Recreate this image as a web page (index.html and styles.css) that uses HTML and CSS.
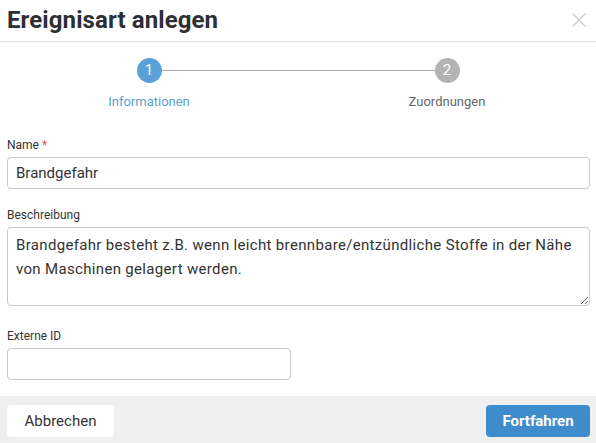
FILE: index.html
```html
<!DOCTYPE html>
<html lang="de">
<head>
<meta charset="utf-8">
<title>Ereignisart anlegen</title>
<link rel="stylesheet" href="styles.css">
</head>
<body>
<div class="modal">
  <header class="modal-header">
    <h1 class="modal-title">Ereignisart anlegen</h1>
    <button class="close" aria-label="Schließen">
      <svg width="14" height="14" viewBox="0 0 14 14"><path d="M0.5 0.5 L13.5 13.5 M13.5 0.5 L0.5 13.5" stroke="#c8c8c8" stroke-width="1.2" fill="none"/></svg>
    </button>
  </header>

  <div class="stepper">
    <div class="step active">
      <div class="step-dot">1</div>
      <div class="step-label">Informationen</div>
    </div>
    <div class="step">
      <div class="step-dot">2</div>
      <div class="step-label">Zuordnungen</div>
    </div>
    <div class="step-line"></div>
  </div>

  <form class="form">
    <div class="field field-name">
      <label class="label">Name <span class="req">*</span></label>
      <input class="input" type="text" value="Brandgefahr">
    </div>
    <div class="field field-desc">
      <label class="label">Beschreibung</label>
      <textarea class="textarea">Brandgefahr besteht z.B. wenn leicht brennbare/entzündliche Stoffe in der Nähe von Maschinen gelagert werden.</textarea>
    </div>
    <div class="field field-ext">
      <label class="label">Externe ID</label>
      <input class="input input-half" type="text" value="">
    </div>
  </form>

  <footer class="modal-footer">
    <button class="btn btn-default" type="button">Abbrechen</button>
    <button class="btn btn-primary" type="button">Fortfahren</button>
  </footer>
</div>
</body>
</html>
```

FILE: styles.css
```css
* { box-sizing: border-box; }
html, body { margin: 0; padding: 0; background: #fff; }
body {
  font-family: Roboto, "Liberation Sans", Arial, sans-serif;
  color: #333;
  width: 596px;
  height: 443px;
  overflow: hidden;
}
.modal { display: flex; flex-direction: column; height: 443px; }

.modal-header {
  height: 42px;
  border-bottom: 1px solid #e0e0e0;
  display: flex;
  align-items: center;
  justify-content: space-between;
  padding: 0 10px 0 7px;
}
.modal-title {
  margin: 0;
  font-size: 24px;
  font-weight: 700;
  color: #2d2f34;
  line-height: 41px;
  letter-spacing: 0.1px;
}
.close {
  border: 0;
  background: none;
  padding: 0;
  width: 14px;
  height: 14px;
  margin-top: -2px;
  display: flex;
}

.stepper {
  position: relative;
  display: grid;
  grid-template-columns: 1fr 1fr;
  padding-top: 16px;
}
.step {
  display: flex;
  flex-direction: column;
  align-items: center;
  position: relative;
  z-index: 1;
}
.step-dot {
  width: 25px;
  height: 25px;
  border-radius: 50%;
  background: #b3b3b3;
  color: #fff;
  font-size: 15px;
  line-height: 25px;
  text-align: center;
}
.step.active .step-dot { background: #5aa1da; }
.step-label {
  margin-top: 10px;
  font-size: 13px;
  line-height: 18px;
  color: #666;
}
.step.active .step-label { color: #5a9fcc; }
.step-line {
  position: absolute;
  top: 28px;
  left: 25%;
  right: 25%;
  height: 1px;
  background: #a8a8a8;
}

.form {
  padding: 26px 6px 0 7px;
  display: flex;
  flex-direction: column;
}
.field { display: flex; flex-direction: column; }
.field-name { margin-bottom: 18px; }
.field-desc { margin-bottom: 22px; }
.label {
  font-size: 12px;
  line-height: 16px;
  color: #333;
  margin-bottom: 4px;
}
.req { color: #d9534f; }
.input {
  height: 32px;
  border: 1px solid #c8c8c8;
  border-radius: 4px;
  padding: 0 8px;
  font-family: inherit;
  font-size: 15px;
  color: #333;
  background: #fff;
}
.input-half { width: 284px; height: 32px; }
.textarea {
  display: block;
  height: 79px;
  border: 1px solid #c8c8c8;
  border-radius: 4px;
  padding: 5px 8px;
  font-family: inherit;
  font-size: 15px;
  line-height: 24px;
  letter-spacing: 0.33px;
  color: #333;
  resize: vertical;
}

.modal-footer {
  margin-top: auto;
  height: 47px;
  background: #efefef;
  display: flex;
  justify-content: space-between;
  align-items: flex-start;
  padding: 9px 6px 0 7px;
}
.btn {
  height: 32px;
  border: 0;
  border-radius: 4px;
  font-family: inherit;
  font-size: 15px;
  padding: 0;
}
.btn-default {
  width: 107px;
  background: #fff;
  color: #333;
}
.btn-primary {
  width: 104px;
  background: #3f8ccc;
  color: #fff;
  font-weight: 700;
}
```
